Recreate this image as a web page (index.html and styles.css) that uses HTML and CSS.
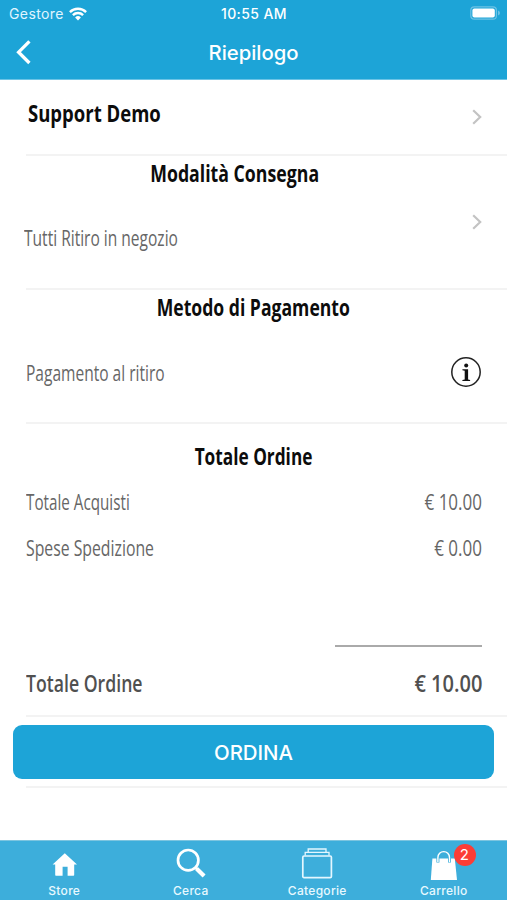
FILE: index.html
```html
<!DOCTYPE html>
<html lang="it">
<head>
<meta charset="utf-8">
<title>Riepilogo</title>
<link rel="stylesheet" href="styles.css">
</head>
<body>
<header class="header">
  <div class="status">
    <div class="carrier"><span>Gestore</span>
      <svg width="18" height="14" viewBox="0 0 18 14" fill="none" stroke="#fff" stroke-width="2.4"><path d="M.9 5.1a11.4 11.4 0 0 1 16.2 0M3.9 8.1a7.2 7.2 0 0 1 10.2 0"/><path d="M6.1 10.5a4.1 4.1 0 0 1 5.8 0L9 13.5z" fill="#fff" stroke="none"/></svg>
    </div>
    <div class="clock">10:55 AM</div>
    <svg class="battery" width="31" height="14" viewBox="0 0 31 14"><rect x=".8" y=".8" width="25.6" height="12.4" rx="3.5" fill="none" stroke="#6cc2e5" stroke-width="1.2"/><rect x="2.4" y="2.4" width="22.4" height="9.2" rx="2" fill="#fff"/><path d="M28 4.5q2 .8 2 2.5t-2 2.5z" fill="#6cc2e5"/></svg>
  </div>
  <nav class="nav">
    <svg class="back" width="16" height="26" viewBox="0 0 16 26" fill="none" stroke="#fff" stroke-width="3.3"><path d="M14.4 1.4 3.6 12.2 14.4 23"/></svg>
    <h1>Riepilogo</h1>
  </nav>
</header>
<main>
  <section class="row store">
    <h2 class="name"><span class="t-name">Support Demo</span></h2>
    <svg class="chevron" width="11" height="16" viewBox="0 0 11 16"><path d="m1.2 1.2 7 6.8-7 6.8"/></svg>
  </section>
  <section class="row delivery">
    <h2><span class="t-delivery">Modalità Consegna</span></h2>
    <div class="line"><p><span class="t-pickup">Tutti Ritiro in negozio</span></p>
    <svg class="chevron" width="11" height="16" viewBox="0 0 11 16"><path d="m1.2 1.2 7 6.8-7 6.8"/></svg></div>
  </section>
  <section class="row payment">
    <h2><span class="t-method">Metodo di Pagamento</span></h2>
    <div class="line"><p><span class="t-pay">Pagamento al ritiro</span></p>
    <svg class="info" width="32" height="32" viewBox="0 0 32 32"><circle cx="16" cy="16" r="14.2" fill="none" stroke="#222" stroke-width="1.5"/><circle cx="16.2" cy="9.6" r="2" fill="#111"/><path d="M12.4 13.2h5.7v10.2l2 .5v1h-7.7v-1l2.3-.5v-8.6l-2.3-.6z" fill="#111"/></svg></div>
  </section>
  <section class="row totals">
    <h2><span class="t-total">Totale Ordine</span></h2>
    <div class="items">
      <div class="line item"><p><span class="t-purchases">Totale Acquisti</span></p><p><span class="amount">€ 10.00</span></p></div>
      <div class="line item"><p><span class="t-shipping">Spese Spedizione</span></p><p><span class="amount">€ 0.00</span></p></div>
    </div>
    <div class="rule"></div>
    <div class="line sum"><p><span class="t-sum">Totale Ordine</span></p><p><span class="amount-sum">€ 10.00</span></p></div>
  </section>
  <section class="row action"><button type="button">ORDINA</button></section>
</main>
<footer class="tabs">
  <a><svg width="34" height="34" viewBox="0 0 34 34" fill="#fff"><path d="M17.8 5.2 30 16.4H27.2v10.4c0 .6-.4 1-1 1h-5.6v-9h-5v9H9.2c-.6 0-1-.4-1-1V16.4H5.6z"/></svg><span>Store</span></a>
  <a><svg width="34" height="34" viewBox="0 0 34 34" fill="none" stroke="#fff"><circle cx="14.2" cy="12.2" r="10.2" stroke-width="2.7"/><path d="m21 19 2.5 2.5" stroke-width="3"/><path d="m22.7 20.7 7.4 7.4" stroke-width="4.2"/></svg><span>Cerca</span></a>
  <a><svg width="34" height="34" viewBox="0 0 34 34" fill="none" stroke="#e4f7ff"><rect x="2.8" y="8" width="28.6" height="21.6" rx="1.2" stroke-width="1.7"/><path d="M5.2 7.5V4.4h23.8v3.1M8.2 4V1h17.8v3" stroke-width="1.3"/></svg><span>Categorie</span></a>
  <a class="cart"><svg width="34" height="34" viewBox="0 0 34 34"><path d="M5.4 10.5h22.4L30 32H3.8z" fill="#fff"/><path d="M10.9 14.6V9.4a5.8 5.8 0 0 1 11.6 0v5.2" fill="none" stroke="#3daedb" stroke-width="3"/><path d="M10.9 14V9.4a5.8 5.8 0 0 1 11.6 0V14" fill="none" stroke="#fff" stroke-width="1.4"/></svg><b class="badge">2</b><span>Carrello</span></a>
</footer>
</body>
</html>
```
FILE: styles.css
```css
* { box-sizing: border-box; }
body { margin: 0; width: 507px; height: 900px; display: flex; flex-direction: column; background: #fff; font-family: "Open Sans", "Noto Sans", sans-serif; overflow: hidden; }
h1, h2, p { margin: 0; }
svg { display: block; flex: none; }
.header { height: 80px; background: #1da4d7; border-bottom: 1px solid #6cc4e6; color: #fff; font-family: Inter, sans-serif; }
.status { height: 27px; display: grid; grid-template-columns: 1fr auto 1fr; align-items: center; padding: 0 6px 0 9px; font-size: 14px; letter-spacing: .4px; }
.carrier { display: flex; align-items: center; gap: 5px; color: #e0f5ff; }
.clock { font-weight: 500; margin-left: -2px; }
.battery { justify-self: end; margin-top: -1px; }
.nav { height: 52px; display: grid; grid-template-columns: 1fr auto 1fr; align-items: center; padding: 0 15px 1px; }
h1 { font-size: 20.3px; font-weight: 500; line-height: 28px; }
main { flex: 1; }
.row { margin-left: 26px; padding-right: 25px; border-bottom: 2px solid #f3f3f3; }
h2 { font-size: 23px; line-height: 30px; font-weight: 700; color: #0c0c0c; text-align: center; }
h2 span, p span { display: inline-block; white-space: nowrap; }
h2 span { transform-origin: center; }
p { font-size: 21px; line-height: 30px; color: #666; }
p span { transform-origin: left; }
.line { display: flex; justify-content: space-between; align-items: center; }
.chevron { fill: none; stroke: #c3c3c3; stroke-width: 2.2; }
.store { height: 76px; display: flex; justify-content: space-between; align-items: center; }
.store h2 { padding: 0 0 9px 2px; }
.store .chevron { margin-right: -1px; }
.delivery { height: 134px; padding-top: 2px; }
.delivery h2, .payment h2, .totals h2 { width: 456px; margin-left: -1px; }
.delivery h2 { margin-left: -19px; }
.delivery .line { align-items: flex-start; padding-top: 26px; margin: 0 -1px 0 -2px; }
.delivery .line p { padding-top: 9px; }
.payment { height: 134px; padding-top: 2px; }
.payment .line { padding-top: 34px; }
.payment p { padding-top: 1px; }
.totals { height: 293px; padding-top: 17px; }
.totals h2 { margin-left: 0; }
.items { padding-top: 8px; }
.item { height: 46px; }
.item + .item { height: 45px; }
.rule { width: 147px; height: 2px; margin: 75px 0 0 auto; background: #aaa; }
.sum { margin-top: 22px; }
.sum p { font-size: 22.5px; font-weight: 600; color: #505050; }
.amount, .amount-sum { transform-origin: right; }
.t-name { transform: scaleX(.805); transform-origin: left; }
.t-delivery { transform: scaleX(.77); }
.t-method { transform: scaleX(.765); }
.t-total { transform: scaleX(.75); }
.t-pickup, .t-pay { transform: scaleX(.74); }
.t-purchases { transform: scaleX(.725); }
.t-shipping { transform: scaleX(.752); }
.amount { transform: scaleX(.81); }
.t-sum { transform: scaleX(.785); }
.amount-sum { transform: scaleX(.89); }
.action { height: 71px; padding: 8px 13px 0 0; }
button { display: block; width: 481px; height: 54px; margin-left: -13px; padding: 1px 0 0; border: 0; border-radius: 9px; background: #1da4d7; color: #fff; font: 500 20.4px/54px Inter, sans-serif; }
.tabs { height: 60px; display: grid; grid-template-columns: repeat(4, 1fr); padding-left: 1px; background: #3daedb; border-top: 1px solid #7dc5e0; color: #e8f9ff; font: 500 12px/16px Inter, sans-serif; letter-spacing: .3px; }
.tabs a { position: relative; display: flex; flex-direction: column; align-items: center; padding-top: 7px; }
.tabs a > span { margin-top: 1px; }
.badge { position: absolute; left: 73px; top: 3px; width: 22px; height: 22px; border-radius: 50%; background: #fc3d36; color: #fff; text-align: center; font: 400 15px/22px Inter, sans-serif; }
```
